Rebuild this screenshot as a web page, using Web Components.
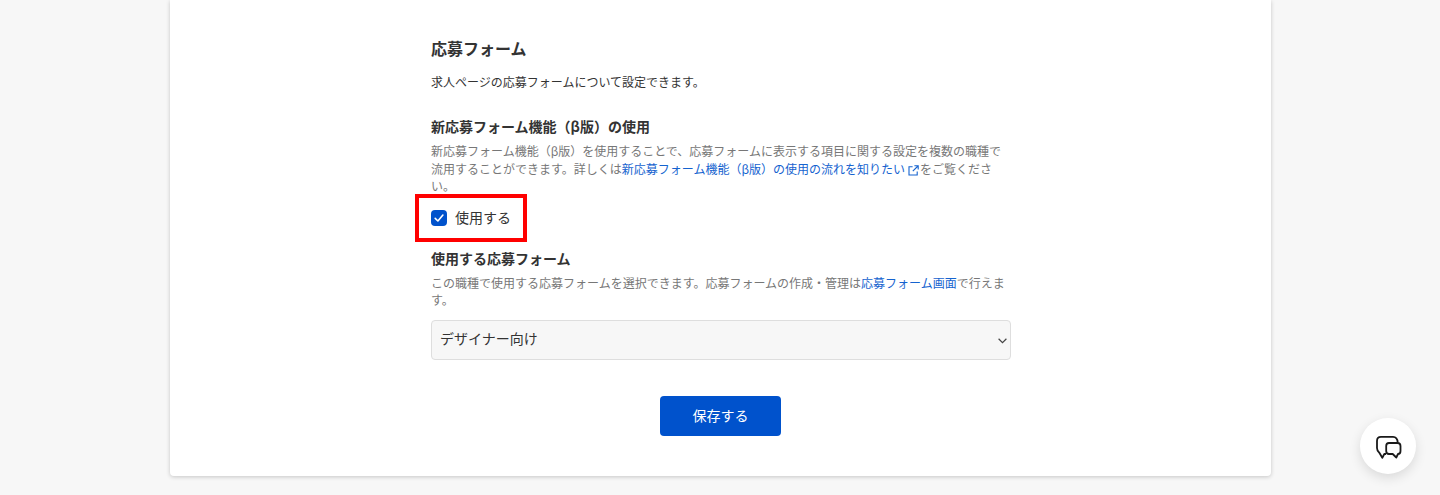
<!DOCTYPE html>
<html lang="ja">
<head>
<meta charset="utf-8">
<title>応募フォーム</title>
<style>
  html, body { margin: 0; height: 495px; overflow: hidden; background: #f7f7f7; }
  body { font-family: "Noto Sans CJK JP", "Noto Sans", sans-serif; color: #333; }
  a { color: #1563cf; text-decoration: none; }
</style>
</head>
<body>
<settings-card>
  <form-section heading="応募フォーム" lead="求人ページの応募フォームについて設定できます。"></form-section>

  <form-field heading="新応募フォーム機能（β版）の使用" style="margin-top:25px">
    新応募フォーム機能（β版）を使用することで、応募フォームに表示する項目に関する設定を複数の職種で流用することができます。詳しくは<a href="#">新応募フォーム機能（β版）の使用の流れを知りたい<external-icon></external-icon></a>をご覧ください。
  </form-field>
  <check-box label="使用する" checked highlighted></check-box>

  <form-field heading="使用する応募フォーム" style="margin-top:20px">
    この職種で使用する応募フォームを選択できます。応募フォームの作成・管理は<a href="#">応募フォーム画面</a>で行えます。
  </form-field>
  <select-box value="デザイナー向け"></select-box>

  <save-button>保存する</save-button>
</settings-card>
<chat-fab></chat-fab>

<script>
// カード本体
class SettingsCard extends HTMLElement {
  constructor() {
    super();
    this.attachShadow({ mode: "open" });
    this.shadowRoot.innerHTML = `
      <style>
        :host {
          display: block;
          box-sizing: border-box;
          width: 1101px;
          height: 476px;
          margin-left: 170px;
          padding: 38px 260px 0 261px;
          background: #fff;
          border-radius: 0 0 4px 4px;
          box-shadow: 0 1px 4px rgba(0, 0, 0, .2);
        }
      </style>
      <slot></slot>
    `;
  }
}

class FormSection extends HTMLElement {
  constructor() {
    super();
    this.attachShadow({ mode: "open" });
    this.shadowRoot.innerHTML = `
      <style>
        :host { display: block; }
        h2 { margin: 0; font-size: 16px; line-height: 20px; font-weight: 700; color: #333; }
        p { margin: 15px 0 0; font-size: 12px; line-height: 18px; color: #333; }
      </style>
      <h2>${this.getAttribute("heading")}</h2>
      <p>${this.getAttribute("lead")}</p>
    `;
  }
}

class FormField extends HTMLElement {
  constructor() {
    super();
    this.attachShadow({ mode: "open" });
    this.shadowRoot.innerHTML = `
      <style>
        :host { display: block; }
        h3 { margin: 0; font-size: 14px; line-height: 20px; font-weight: 700; color: #333; }
        div { margin-top: 6px; font-size: 12px; line-height: 17.5px; color: #777; }
      </style>
      <h3>${this.getAttribute("heading")}</h3>
      <div><slot></slot></div>
    `;
  }
}

class ExternalIcon extends HTMLElement {
  constructor() {
    super();
    this.attachShadow({ mode: "open" });
    this.shadowRoot.innerHTML = `
      <style>
        :host { display: inline-block; width: 11px; height: 11px; margin: 0 1px 0 3px; vertical-align: -2px; }
        svg { display: block; }
      </style>
      <svg width="11" height="11" viewBox="0 0 11 11" fill="none" stroke="#1563cf" stroke-width="1.1">
        <path d="M4.600 1.800H1v8.200h8.200V6.400"/>
        <path d="M6.400 .8h3.800v3.800M10 1 4.800 6.200"/>
      </svg>
    `;
  }
}

class CheckBox extends HTMLElement {
  constructor() {
    super();
    this.attachShadow({ mode: "open" });
    const frame = this.hasAttribute("highlighted") ? '<span class="frame"></span>' : "";
    this.shadowRoot.innerHTML = `
      <style>
        :host { display: flex; position: relative; align-items: center; gap: 8px; width: max-content; margin-top: 13px; height: 20px; }
        .box { width: 16px; height: 16px; border-radius: 4px; background: #0052cc; display: block; }
        svg { display: block; }
        label { font-size: 14px; line-height: 20px; color: #333; margin-top: -2px; }
        .frame { position: absolute; left: -16px; top: -14px; width: 104px; height: 40px; border: 4px solid #f00; }
      </style>
      <span class="box">
        <svg width="16" height="16" viewBox="0 0 16 16" fill="none" stroke="#fff" stroke-width="1.6" stroke-linecap="round" stroke-linejoin="round"><path d="M4.200 8.400 6.900 11l5-6"/></svg>
      </span>
      <label>${this.getAttribute("label")}</label>
      ${frame}
    `;
  }
}

class SelectBox extends HTMLElement {
  constructor() {
    super();
    this.attachShadow({ mode: "open" });
    this.shadowRoot.innerHTML = `
      <style>
        :host { display: block; position: relative; margin-top: 11px; height: 40px; }
        select {
          appearance: none;
          box-sizing: border-box;
          width: 100%;
          height: 40px;
          padding: 0 24px 3px 8px;
          border: 1px solid #dedede;
          border-radius: 4px;
          background: #f7f7f7;
          color: #333;
          font: 14px "Noto Sans CJK JP", "Noto Sans", sans-serif;
        }
        svg { position: absolute; right: 4px; top: 18px; pointer-events: none; }
      </style>
      <select><option>${this.getAttribute("value")}</option></select>
      <svg width="9" height="6" viewBox="0 0 9 6" fill="none" stroke="#444" stroke-width="1.200"><path d="M.6.800 4.500 4.600 8.400.8"/></svg>
    `;
  }
}

class SaveButton extends HTMLElement {
  constructor() {
    super();
    this.attachShadow({ mode: "open" });
    this.shadowRoot.innerHTML = `
      <style>
        :host { display: flex; justify-content: center; margin-top: 36px; padding-right: 1px; }
        button {
          width: 121px;
          height: 40px;
          padding: 0 0 2px;
          border: 0;
          border-radius: 4px;
          background: #0052cc;
          color: #fff;
          font: 14px "Noto Sans CJK JP", "Noto Sans", sans-serif;
        }
      </style>
      <button type="button"><slot></slot></button>
    `;
  }
}

// 右下のチャットボタン
class ChatFab extends HTMLElement {
  constructor() {
    super();
    this.attachShadow({ mode: "open" });
    this.shadowRoot.innerHTML = `
      <style>
        :host {
          position: fixed;
          left: 1360px;
          top: 418px;
          width: 56px;
          height: 56px;
          display: flex;
          align-items: center;
          justify-content: center;
          border-radius: 50%;
          background: #fff;
          box-shadow: 0 4px 12px rgba(0, 0, 0, .12);
        }
      </style>
      <svg width="28" height="26" viewBox="1374 433 28 26" fill="none" stroke="#1a1a1a" stroke-width="1.800" stroke-linejoin="round">
        <path d="M1386 454H1384.300L1382.300 457.800L1379.500 453C1377.500 451.500 1377 450 1377 448V441C1377 438 1379 436.800 1381 436.800H1393C1396 436.800 1397.500 438.500 1397.700 442.500"/>
        <path d="M1389 443H1397.500C1399.500 443 1400.500 444.500 1400.500 446V451C1400.500 452.800 1399.500 454 1398 454L1396.300 457.500L1392.700 454H1389C1387.200 454 1386.200 452.800 1386.200 451V446C1386.200 444.300 1387.200 443 1389 443Z"/>
      </svg>
    `;
  }
}

customElements.define("settings-card", SettingsCard);
customElements.define("form-section", FormSection);
customElements.define("form-field", FormField);
customElements.define("external-icon", ExternalIcon);
customElements.define("check-box", CheckBox);
customElements.define("select-box", SelectBox);
customElements.define("save-button", SaveButton);
customElements.define("chat-fab", ChatFab);
</script>
</body>
</html>
